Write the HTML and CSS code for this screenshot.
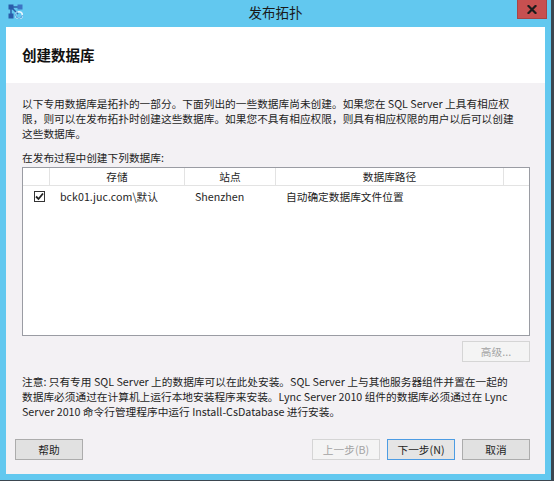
FILE: index.html
```html
<!DOCTYPE html>
<html lang="zh-CN">
<head>
<meta charset="utf-8">
<title>发布拓扑</title>
<link rel="stylesheet" href="styles.css">
</head>
<body>
<div class="window">
  <div class="titlebar">
    <svg class="app-icon" width="15" height="15" viewBox="0 0 15 15">
      <line x1="3" y1="3" x2="11" y2="3" stroke="#2d5fa8" stroke-width="1.5"/>
      <line x1="3" y1="3" x2="3" y2="11" stroke="#2d5fa8" stroke-width="1.5"/>
      <line x1="3" y1="3" x2="10" y2="10" stroke="#2d5fa8" stroke-width="1.5"/>
      <rect x="0.5" y="0.5" width="5" height="5" fill="#2a5caa"/>
      <rect x="9.5" y="0.5" width="5" height="5" fill="#3d74c4"/>
      <rect x="0.5" y="9.5" width="5" height="5" fill="#2a5caa"/>
      <circle cx="11" cy="11" r="3.3" fill="none" stroke="#e8f6ff" stroke-width="1.6"/>
      <circle cx="11" cy="11" r="3.3" fill="none" stroke="#2f8fd8" stroke-width="1" stroke-dasharray="14 7"/>
    </svg>
    <div class="title">发布拓扑</div>
    <div class="close-btn">
      <svg width="10" height="9" viewBox="0 0 10 9">
        <path d="M1.5 1 L8.5 8 M8.5 1 L1.5 8" stroke="#1c1c1c" stroke-width="2.2" stroke-linecap="square"/>
      </svg>
    </div>
  </div>
  <div class="client">
    <div class="page-header">创建数据库</div>
    <div class="page-body">
      <p class="intro">以下专用数据库是拓扑的一部分。下面列出的一些数据库尚未创建。如果您在 SQL Server 上具有相应权<br>限，则可以在发布拓扑时创建这些数据库。如果您不具有相应权限，则具有相应权限的用户以后可以创建<br>这些数据库。</p>
      <p class="list-label">在发布过程中创建下列数据库:</p>
      <div class="listview">
        <div class="lv-row lv-head">
          <div class="lv-cell"></div>
          <div class="lv-cell">存储</div>
          <div class="lv-cell">站点</div>
          <div class="lv-cell">数据库路径</div>
          <div class="lv-cell"></div>
        </div>
        <div class="lv-row lv-item">
          <div class="lv-cell cb-cell"><span class="checkbox"><svg width="9" height="9" viewBox="0 0 9 9"><path d="M1 4.5 L3.5 7 L8 1.5" fill="none" stroke="#222" stroke-width="1.8"/></svg></span></div>
          <div class="lv-cell">bck01.juc.com\默认</div>
          <div class="lv-cell">Shenzhen</div>
          <div class="lv-cell">自动确定数据库文件位置</div>
          <div class="lv-cell"></div>
        </div>
      </div>
      <div class="adv-row"><button class="btn disabled">高级...</button></div>
      <p class="note">注意: 只有专用 SQL Server 上的数据库可以在此处安装。SQL Server 上与其他服务器组件并置在一起的<br>数据库必须通过在计算机上运行本地安装程序来安装。Lync Server 2010 组件的数据库必须通过在 Lync<br>Server 2010 命令行管理程序中运行 Install-CsDatabase 进行安装。</p>
    </div>
    <div class="footer">
      <button class="btn">帮助</button>
      <div class="nav-buttons">
        <button class="btn disabled">上一步(B)</button>
        <button class="btn default">下一步(N)</button>
        <button class="btn">取消</button>
      </div>
    </div>
  </div>
</div>
</body>
</html>
```

FILE: styles.css
```css
html, body {
  margin: 0;
  padding: 0;
}
body {
  width: 554px;
  height: 481px;
  background: #3b4650;
  font-family: "Segoe UI", "Noto Sans CJK SC", sans-serif;
  font-size: 10.7px;
  color: #1e1e1e;
  overflow: hidden;
}
.window {
  width: 551px;
  height: 480px;
  box-sizing: border-box;
  background: #62c8ef;
  padding: 0 6px 6px 6px;
  display: flex;
  flex-direction: column;
}
.titlebar {
  height: 27px;
  flex: none;
  display: flex;
  align-items: flex-start;
  position: relative;
}
.app-icon {
  margin: 4px 0 0 2px;
}
.title {
  position: absolute;
  left: -6px;
  right: -6px;
  top: 3px;
  text-align: center;
  font-size: 13.5px;
  line-height: 18px;
  color: #1a1a1a;
}
.close-btn {
  position: absolute;
  right: -2px;
  top: 0;
  width: 30px;
  height: 19px;
  background: #c75050;
  box-sizing: border-box;
  border: 1px solid #a84545;
  border-top: none;
  display: flex;
  align-items: center;
  justify-content: center;
}
.client {
  flex: 1;
  min-height: 0;
  background: #f3f1f4;
  display: flex;
  flex-direction: column;
}
.page-header {
  height: 56px;
  flex: none;
  background: #ffffff;
  padding-left: 16px;
  font-size: 14.5px;
  font-weight: bold;
  line-height: 56px;
  color: #111;
}
.page-body {
  padding: 0 15px 0 16px;
}
.intro {
  margin: 13px 0 0 0;
  line-height: 15px;
  white-space: nowrap;
}
.list-label {
  margin: 9px 0 0 0;
  line-height: 15px;
}
.listview {
  margin-top: 2px;
  height: 169px;
  box-sizing: border-box;
  border: 1px solid #9a9ca3;
  background: #ffffff;
}
.lv-row {
  display: grid;
  grid-template-columns: 27px 135px 91px 228px 1fr;
}
.lv-head {
  height: 18px;
  line-height: 17px;
  box-sizing: border-box;
  border-bottom: 1px solid #e3e3e3;
}
.lv-head .lv-cell {
  text-align: center;
  border-right: 1px solid #e3e3e3;
}
.lv-head .lv-cell:last-child {
  border-right: none;
}
.lv-item {
  height: 21px;
  line-height: 21px;
}
.lv-item .lv-cell {
  padding-left: 10px;
  white-space: nowrap;
}
.lv-item .lv-cell.cb-cell {
  padding-left: 11px;
  display: flex;
  align-items: center;
}
.checkbox {
  width: 11px;
  height: 11px;
  box-sizing: border-box;
  border: 1px solid #333;
  background: #fff;
  display: flex;
  align-items: center;
  justify-content: center;
}
.adv-row {
  display: flex;
  justify-content: flex-end;
  margin-top: 5px;
}
.btn {
  width: 68px;
  height: 21px;
  box-sizing: border-box;
  border: 1px solid #acacac;
  background: #e1e1e1;
  font-family: "Segoe UI", "Noto Sans CJK SC", sans-serif;
  font-size: 10.7px;
  color: #1e1e1e;
  padding: 0;
  line-height: 19px;
}
.btn.disabled {
  background: #f4f4f4;
  border-color: #d5d5d5;
  color: #a3a3a3;
}
.btn.default {
  border-color: #4d9ce3;
  background: #e5e5e5;
}
.note {
  margin: 12px 0 0 0;
  line-height: 15px;
  white-space: nowrap;
}
.footer {
  margin-top: auto;
  padding: 0 15px 14px 9px;
  display: flex;
  justify-content: space-between;
}
.nav-buttons {
  display: flex;
  gap: 7px;
}
```
